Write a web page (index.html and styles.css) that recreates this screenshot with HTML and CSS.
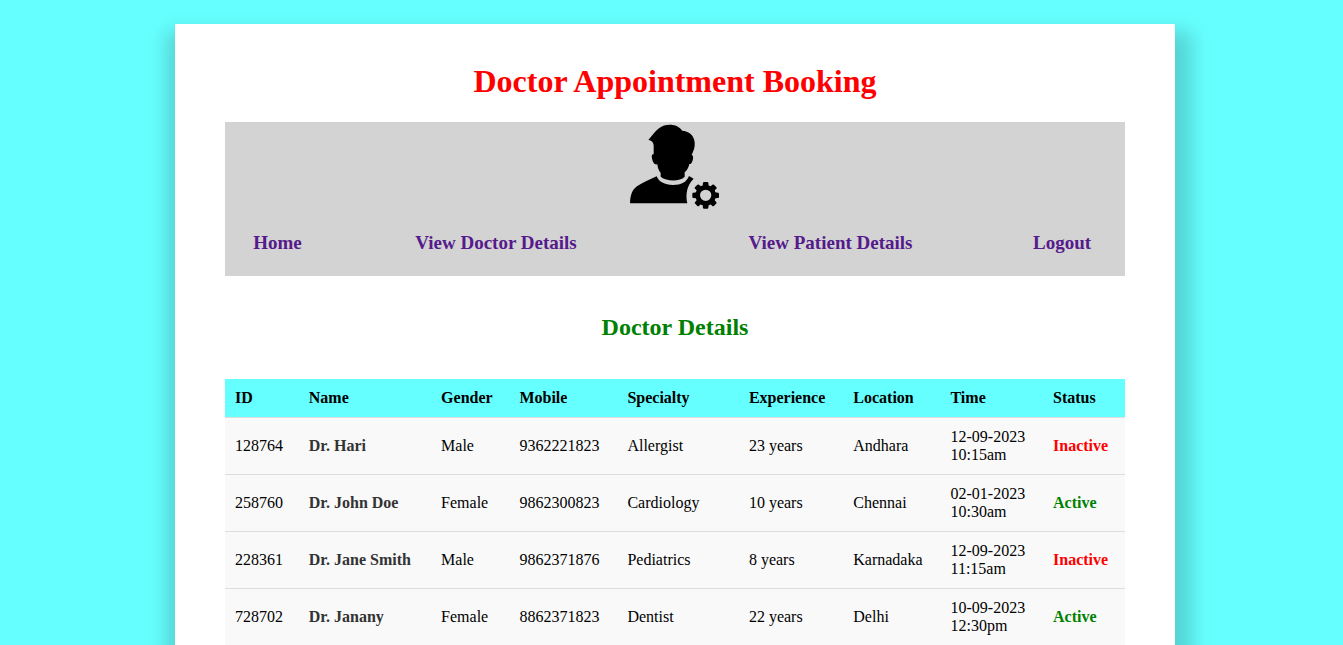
FILE: index.html
```html
<!DOCTYPE html>
<html lang="en">
<head>
<meta charset="utf-8">
<title>Doctor Appointment Booking</title>
<link rel="stylesheet" href="styles.css">
</head>
<body>
<main class="container">
  <h1 class="title">Doctor Appointment Booking</h1>
  <nav class="navbar" aria-label="Main">
    <svg class="avatar" viewBox="45 21 270 270" role="img" aria-label="Administrator">
      <path d="M100 75C113 60 119 50 132 40C143 31 159 28 173 30C184 31 195 38 202 47C221 49 233 58 237 73C242 88 238 106 230 119C236 121 235 133 231 141C229 146 226 148 223 147C221 158 216 166 209 172L209 185C195 200 155 200 137 185L137 174C131 167 128 158 127 148C121 149 117 147 115 142C111 134 108 121 113 118L116 118L116 100C117 85 113 77 100 75Z"/>
      <path d="M125 184C132 201 148 209 174 210C199 210 214 202 222 183L236 191C216 211 211 237 217 265L45 265C46 240 51 225 66 214C81 203 103 195 125 184Z"/>
      <g transform="translate(272 241)">
        <g class="teeth">
          <path id="tooth" d="M-9 -27L-8 -38Q-7 -40 -5 -40L5 -40Q7 -40 8 -38L9 -27Z"/>
          <use href="#tooth" transform="rotate(45)"/>
          <use href="#tooth" transform="rotate(90)"/>
          <use href="#tooth" transform="rotate(135)"/>
          <use href="#tooth" transform="rotate(180)"/>
          <use href="#tooth" transform="rotate(225)"/>
          <use href="#tooth" transform="rotate(270)"/>
          <use href="#tooth" transform="rotate(315)"/>
        </g>
        <circle class="ring" r="24"/>
      </g>
    </svg>
    <ul class="links">
      <li><a href="#home">Home</a></li>
      <li><a href="#doctors">View Doctor Details</a></li>
      <li><a href="#patients">View Patient Details</a></li>
      <li><a href="#logout">Logout</a></li>
    </ul>
  </nav>
  <h2 class="subtitle" id="doctors">Doctor Details</h2>
  <table class="doctors" aria-labelledby="doctors">
    <colgroup>
      <col class="col-id"><col class="col-name"><col class="col-gender"><col class="col-mobile"><col class="col-specialty"><col class="col-experience"><col class="col-location"><col class="col-time"><col class="col-status">
    </colgroup>
    <thead>
      <tr><th>ID</th><th>Name</th><th>Gender</th><th>Mobile</th><th>Specialty</th><th>Experience</th><th>Location</th><th>Time</th><th>Status</th></tr>
    </thead>
    <tbody>
      <tr><td>128764</td><td class="name">Dr. Hari</td><td>Male</td><td>9362221823</td><td>Allergist</td><td>23 years</td><td>Andhara</td><td>12-09-2023 10:15am</td><td class="inactive">Inactive</td></tr>
      <tr><td>258760</td><td class="name">Dr. John Doe</td><td>Female</td><td>9862300823</td><td>Cardiology</td><td>10 years</td><td>Chennai</td><td>02-01-2023 10:30am</td><td class="active">Active</td></tr>
      <tr><td>228361</td><td class="name">Dr. Jane Smith</td><td>Male</td><td>9862371876</td><td>Pediatrics</td><td>8 years</td><td>Karnadaka</td><td>12-09-2023 11:15am</td><td class="inactive">Inactive</td></tr>
      <tr><td>728702</td><td class="name">Dr. Janany</td><td>Female</td><td>8862371823</td><td>Dentist</td><td>22 years</td><td>Delhi</td><td>10-09-2023 12:30pm</td><td class="active">Active</td></tr>
    </tbody>
  </table>
</main>
</body>
</html>
```
FILE: styles.css
```css
* {
  box-sizing: border-box;
}

body {
  margin: 0;
  padding: 24px 0 24px 7px;
  background: #66ffff;
  color: #000;
  font-family: "Liberation Serif", "Times New Roman", serif;
  font-size: 16px;
  line-height: 18px;
}

.container {
  max-width: 1000px;
  margin: 0 auto;
  padding: 39px 50px;
  background: #fff;
  box-shadow: 4px 20px 18px 13px rgba(0, 0, 0, 0.17);
}

.title {
  margin: 0 0 23px;
  color: #f00;
  font-size: 32px;
  line-height: 36px;
  text-align: center;
}

.navbar {
  background: #d3d3d3;
}

.avatar {
  display: block;
  width: 90px;
  height: 90px;
  margin: 0 auto;
}

.ring {
  fill: none;
  stroke: #000;
  stroke-width: 14px;
}

.links {
  display: grid;
  grid-template-columns: 105fr 332fr 337fr 126fr;
  margin: 0;
  padding: 20px 0 22px;
  list-style: none;
  font-size: 19px;
  font-weight: bold;
  line-height: 22px;
  text-align: center;
}

.links a {
  color: #551a8b;
  text-decoration: none;
}

.subtitle {
  margin: 38px 0;
  color: #008000;
  font-size: 24px;
  line-height: 27px;
  text-align: center;
}

.doctors {
  width: 100%;
  table-layout: fixed;
  border-collapse: collapse;
  text-align: left;
}

.doctors th,
.doctors td {
  padding: 10px;
}

.doctors tr {
  background: #f9f9f9;
  border-bottom: 1px solid #ddd;
}

.doctors thead tr {
  background: #66ffff;
}

.col-id { width: 8.2%; }
.col-name { width: 14.7%; }
.col-gender { width: 8.7%; }
.col-mobile { width: 12%; }
.col-specialty { width: 13.5%; }
.col-experience { width: 11.6%; }
.col-location { width: 10.8%; }
.col-time { width: 11.4%; }
.col-status { width: 9.1%; }

.name {
  color: #333;
  font-weight: bold;
}

.active {
  color: #008000;
  font-weight: bold;
}

.inactive {
  color: #f00;
  font-weight: bold;
}
```
